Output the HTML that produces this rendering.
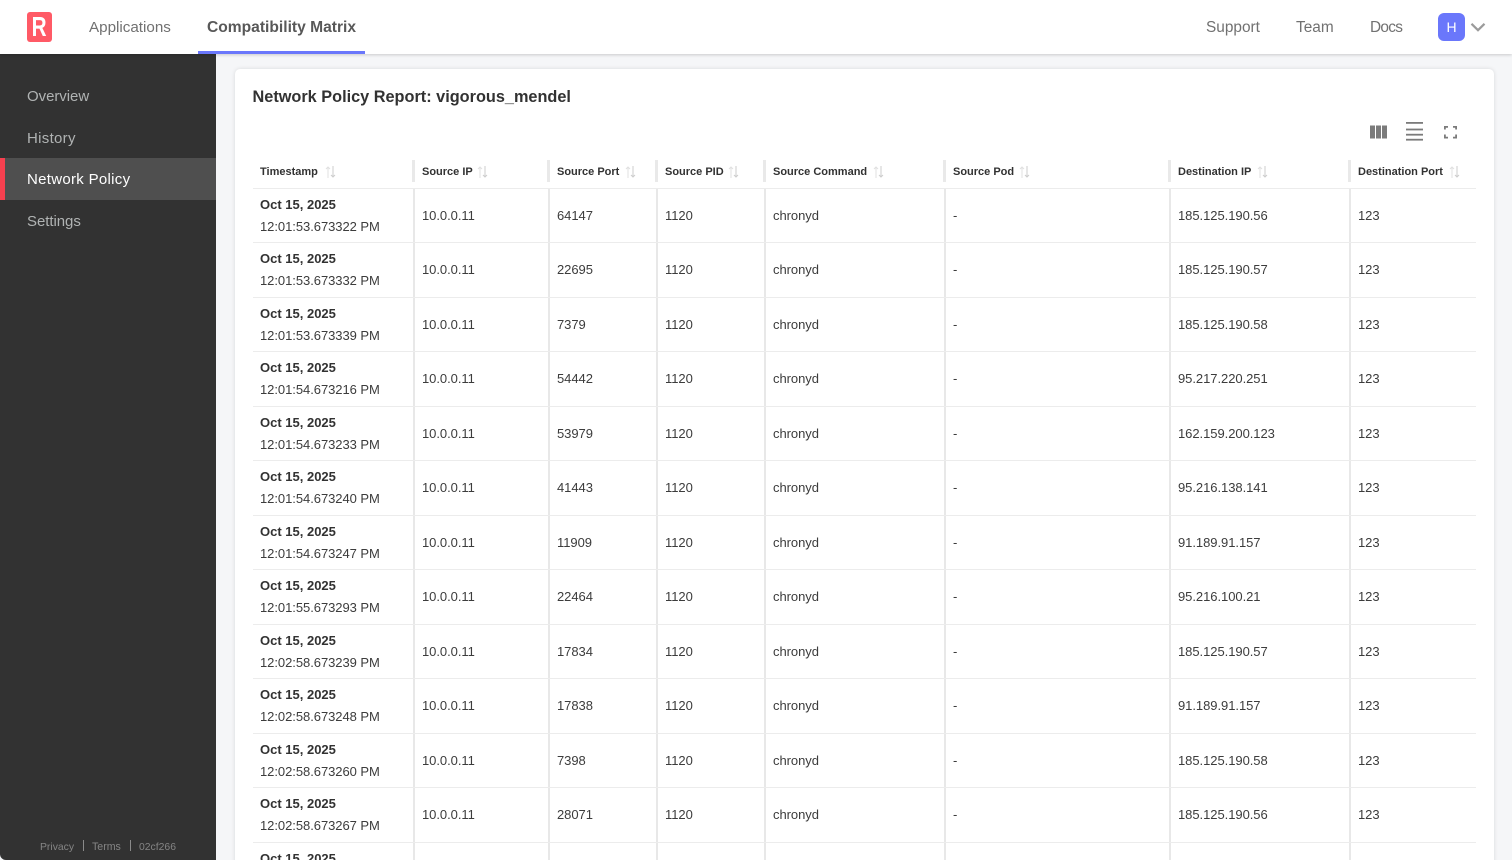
<!DOCTYPE html>
<html><head><meta charset="utf-8"><title>Network Policy</title>
<style>
*{box-sizing:border-box}
html,body{margin:0;padding:0;width:1512px;height:860px;overflow:hidden;background:#f5f6f8;font-family:"Liberation Sans",sans-serif;color:#323232}
#page{position:relative;width:1512px;height:860px;overflow:hidden;background:#f5f6f8}
.a{position:absolute;white-space:nowrap}
#top{position:absolute;left:0;top:0;width:1512px;height:54px;background:#fff;box-shadow:0 1px 3px rgba(0,0,0,.18);z-index:3}
.nav{position:absolute;top:18px;font-size:15.4px;line-height:19px;color:#717171;white-space:nowrap}
#side{position:absolute;left:0;top:54px;width:216px;height:806px;background:#323232;border-bottom-left-radius:6px}
.si{position:absolute;left:27px;font-size:15px;line-height:20px;color:#b0b3b3;letter-spacing:.3px;white-space:nowrap}
#card{position:absolute;left:235px;top:69px;width:1259px;height:830px;background:#fff;border-radius:5px;box-shadow:0 0 4px rgba(0,0,0,.12)}
.r{position:absolute;left:253px;width:1223px;height:54.5px;border-bottom:1px solid #ececec;display:flex}
.c{height:100%;position:relative;font-size:13px;color:#3c3c3c;line-height:54px;padding-left:7px;white-space:nowrap;border-left:2px solid #e8e8e8;letter-spacing:-.05px}
.c:first-child{border-left:0;line-height:22px;padding-top:5px}
.c b{display:block;color:#323232;font-weight:bold;letter-spacing:0}
.w1{width:160px}.w2{width:135px}.w3{width:108px}.w4{width:108px}.w5{width:180px}.w6{width:225px}.w7{width:180px}.w8{width:127px}
.h{position:absolute;top:165px;font-size:11px;line-height:14px;font-weight:bold;color:#323232;white-space:nowrap}
.sp{position:absolute;top:160px;width:3px;height:22px;background:#e9e9e9}
.so{position:absolute;top:166px;width:11px;height:12px}
</style></head><body><div id="page">
<div id="side">
<div class="si" style="top:33px;letter-spacing:-.05px">Overview</div>
<div class="si" style="top:75px">History</div>
<div style="position:absolute;left:0;top:104px;width:216px;height:42px;background:#4f4f4f;border-left:5px solid #f6404f"></div>
<div class="si" style="top:116px;color:#fff">Network Policy</div>
<div class="si" style="top:158px;letter-spacing:-.05px">Settings</div>
<div class="a" style="left:40px;top:787px;font-size:10.4px;line-height:13px;color:#858585">Privacy</div>
<div style="position:absolute;left:83px;top:786px;width:1px;height:11px;background:#8a8a8a"></div>
<div class="a" style="left:92px;top:787px;font-size:10.6px;line-height:13px;color:#858585">Terms</div>
<div style="position:absolute;left:130px;top:786px;width:1px;height:11px;background:#8a8a8a"></div>
<div class="a" style="left:139px;top:787px;font-size:10.4px;line-height:13px;color:#858585">02cf266</div>
</div>
<div id="top">
<div style="position:absolute;left:27px;top:12px;width:25px;height:30px;background:#ff5a66;border-radius:3px;color:#fff;font-weight:bold;font-size:28px;line-height:30px;text-align:center"><span style="display:inline-block;transform:scaleX(.74)">R</span></div>
<div class="nav" style="left:89px;font-size:15.2px">Applications</div>
<div class="nav" style="left:207px;font-weight:bold;color:#585858;font-size:15.6px">Compatibility Matrix</div>
<div style="position:absolute;left:198px;top:51px;width:167px;height:3px;background:#6a77fb"></div>
<div class="nav" style="left:1206px">Support</div>
<div class="nav" style="left:1296px">Team</div>
<div class="nav" style="left:1370px;letter-spacing:-.7px">Docs</div>
<div style="position:absolute;left:1438px;top:13px;width:27px;height:28px;background:#6a77fb;border-radius:6px;color:#fff;font-size:14px;line-height:28px;text-align:center">H</div>
<svg style="position:absolute;left:1470px;top:22px" width="16" height="11" viewBox="0 0 16 11"><path d="M1.5 1.8L8 8.2L14.500 1.800" fill="none" stroke="#9b9b9b" stroke-width="2.200"/></svg>
</div>
<div id="card"></div>
<div class="a" style="left:252.5px;top:87px;font-size:16.3px;line-height:20px;font-weight:bold;color:#323232">Network Policy Report: vigorous_mendel</div>
<svg style="position:absolute;left:1370px;top:122px" width="90" height="20" viewBox="0 0 90 20" fill="#7b7b7b"><rect x="0" y="3.500" width="5" height="13"/><rect x="6" y="3.500" width="5" height="13"/><rect x="12" y="3.500" width="5" height="13"/><rect x="36" y="0" width="17" height="1.800"/><rect x="36" y="6.600" width="17" height="1.800"/><rect x="36" y="11.800" width="17" height="1.800"/><rect x="36" y="16.800" width="17" height="1.800"/><path d="M74 7.500V4H78V5.800H75.800V7.500ZM83 4H87V7.500H85.200V5.800H83ZM74 12.500H75.800V14.700H78V16.500H74ZM85.200 12.500H87V16.500H83V14.700H85.200Z"/></svg>

<div class="h" style="left:260px">Timestamp</div>
<div class="h" style="left:422px">Source IP</div>
<div class="h" style="left:557px">Source Port</div>
<div class="h" style="left:665px">Source PID</div>
<div class="h" style="left:773px">Source Command</div>
<div class="h" style="left:953px">Source Pod</div>
<div class="h" style="left:1178px">Destination IP</div>
<div class="h" style="left:1358px">Destination Port</div>
<div class="sp" style="left:412px"></div><div class="sp" style="left:547px"></div><div class="sp" style="left:655px"></div><div class="sp" style="left:763px"></div><div class="sp" style="left:943px"></div><div class="sp" style="left:1168px"></div><div class="sp" style="left:1348px"></div>
<svg class="so" style="left:325px" viewBox="0 0 11 12"><path d="M3 12V1M1 3L3 1L5 3" fill="none" stroke="#e0e0e0" stroke-width="1"/><path d="M8 0V11M6 9L8 11L10 9" fill="none" stroke="#cdcdcd" stroke-width="1"/></svg>
<svg class="so" style="left:477px" viewBox="0 0 11 12"><path d="M3 12V1M1 3L3 1L5 3" fill="none" stroke="#e0e0e0" stroke-width="1"/><path d="M8 0V11M6 9L8 11L10 9" fill="none" stroke="#cdcdcd" stroke-width="1"/></svg>
<svg class="so" style="left:625px" viewBox="0 0 11 12"><path d="M3 12V1M1 3L3 1L5 3" fill="none" stroke="#e0e0e0" stroke-width="1"/><path d="M8 0V11M6 9L8 11L10 9" fill="none" stroke="#cdcdcd" stroke-width="1"/></svg>
<svg class="so" style="left:728px" viewBox="0 0 11 12"><path d="M3 12V1M1 3L3 1L5 3" fill="none" stroke="#e0e0e0" stroke-width="1"/><path d="M8 0V11M6 9L8 11L10 9" fill="none" stroke="#cdcdcd" stroke-width="1"/></svg>
<svg class="so" style="left:873px" viewBox="0 0 11 12"><path d="M3 12V1M1 3L3 1L5 3" fill="none" stroke="#e0e0e0" stroke-width="1"/><path d="M8 0V11M6 9L8 11L10 9" fill="none" stroke="#cdcdcd" stroke-width="1"/></svg>
<svg class="so" style="left:1019px" viewBox="0 0 11 12"><path d="M3 12V1M1 3L3 1L5 3" fill="none" stroke="#e0e0e0" stroke-width="1"/><path d="M8 0V11M6 9L8 11L10 9" fill="none" stroke="#cdcdcd" stroke-width="1"/></svg>
<svg class="so" style="left:1257px" viewBox="0 0 11 12"><path d="M3 12V1M1 3L3 1L5 3" fill="none" stroke="#e0e0e0" stroke-width="1"/><path d="M8 0V11M6 9L8 11L10 9" fill="none" stroke="#cdcdcd" stroke-width="1"/></svg>
<svg class="so" style="left:1449px" viewBox="0 0 11 12"><path d="M3 12V1M1 3L3 1L5 3" fill="none" stroke="#e0e0e0" stroke-width="1"/><path d="M8 0V11M6 9L8 11L10 9" fill="none" stroke="#cdcdcd" stroke-width="1"/></svg>
<div style="position:absolute;left:253px;top:188px;width:1223px;height:1px;background:#ececec"></div>

<div class="r" style="top:188.5px"><div class="c w1"><b>Oct 15, 2025</b>12:01:53.673322 PM</div><div class="c w2">10.0.0.11</div><div class="c w3">64147</div><div class="c w4">1120</div><div class="c w5">chronyd</div><div class="c w6">-</div><div class="c w7">185.125.190.56</div><div class="c w8">123</div></div>
<div class="r" style="top:243px"><div class="c w1"><b>Oct 15, 2025</b>12:01:53.673332 PM</div><div class="c w2">10.0.0.11</div><div class="c w3">22695</div><div class="c w4">1120</div><div class="c w5">chronyd</div><div class="c w6">-</div><div class="c w7">185.125.190.57</div><div class="c w8">123</div></div>
<div class="r" style="top:297.5px"><div class="c w1"><b>Oct 15, 2025</b>12:01:53.673339 PM</div><div class="c w2">10.0.0.11</div><div class="c w3">7379</div><div class="c w4">1120</div><div class="c w5">chronyd</div><div class="c w6">-</div><div class="c w7">185.125.190.58</div><div class="c w8">123</div></div>
<div class="r" style="top:352px"><div class="c w1"><b>Oct 15, 2025</b>12:01:54.673216 PM</div><div class="c w2">10.0.0.11</div><div class="c w3">54442</div><div class="c w4">1120</div><div class="c w5">chronyd</div><div class="c w6">-</div><div class="c w7">95.217.220.251</div><div class="c w8">123</div></div>
<div class="r" style="top:406.5px"><div class="c w1"><b>Oct 15, 2025</b>12:01:54.673233 PM</div><div class="c w2">10.0.0.11</div><div class="c w3">53979</div><div class="c w4">1120</div><div class="c w5">chronyd</div><div class="c w6">-</div><div class="c w7">162.159.200.123</div><div class="c w8">123</div></div>
<div class="r" style="top:461px"><div class="c w1"><b>Oct 15, 2025</b>12:01:54.673240 PM</div><div class="c w2">10.0.0.11</div><div class="c w3">41443</div><div class="c w4">1120</div><div class="c w5">chronyd</div><div class="c w6">-</div><div class="c w7">95.216.138.141</div><div class="c w8">123</div></div>
<div class="r" style="top:515.5px"><div class="c w1"><b>Oct 15, 2025</b>12:01:54.673247 PM</div><div class="c w2">10.0.0.11</div><div class="c w3">11909</div><div class="c w4">1120</div><div class="c w5">chronyd</div><div class="c w6">-</div><div class="c w7">91.189.91.157</div><div class="c w8">123</div></div>
<div class="r" style="top:570px"><div class="c w1"><b>Oct 15, 2025</b>12:01:55.673293 PM</div><div class="c w2">10.0.0.11</div><div class="c w3">22464</div><div class="c w4">1120</div><div class="c w5">chronyd</div><div class="c w6">-</div><div class="c w7">95.216.100.21</div><div class="c w8">123</div></div>
<div class="r" style="top:624.5px"><div class="c w1"><b>Oct 15, 2025</b>12:02:58.673239 PM</div><div class="c w2">10.0.0.11</div><div class="c w3">17834</div><div class="c w4">1120</div><div class="c w5">chronyd</div><div class="c w6">-</div><div class="c w7">185.125.190.57</div><div class="c w8">123</div></div>
<div class="r" style="top:679px"><div class="c w1"><b>Oct 15, 2025</b>12:02:58.673248 PM</div><div class="c w2">10.0.0.11</div><div class="c w3">17838</div><div class="c w4">1120</div><div class="c w5">chronyd</div><div class="c w6">-</div><div class="c w7">91.189.91.157</div><div class="c w8">123</div></div>
<div class="r" style="top:733.5px"><div class="c w1"><b>Oct 15, 2025</b>12:02:58.673260 PM</div><div class="c w2">10.0.0.11</div><div class="c w3">7398</div><div class="c w4">1120</div><div class="c w5">chronyd</div><div class="c w6">-</div><div class="c w7">185.125.190.58</div><div class="c w8">123</div></div>
<div class="r" style="top:788px"><div class="c w1"><b>Oct 15, 2025</b>12:02:58.673267 PM</div><div class="c w2">10.0.0.11</div><div class="c w3">28071</div><div class="c w4">1120</div><div class="c w5">chronyd</div><div class="c w6">-</div><div class="c w7">185.125.190.56</div><div class="c w8">123</div></div>
<div class="r" style="top:842.5px"><div class="c w1"><b>Oct 15, 2025</b></div><div class="c w2"></div><div class="c w3"></div><div class="c w4"></div><div class="c w5"></div><div class="c w6"></div><div class="c w7"></div><div class="c w8"></div></div>
</div></body></html>
